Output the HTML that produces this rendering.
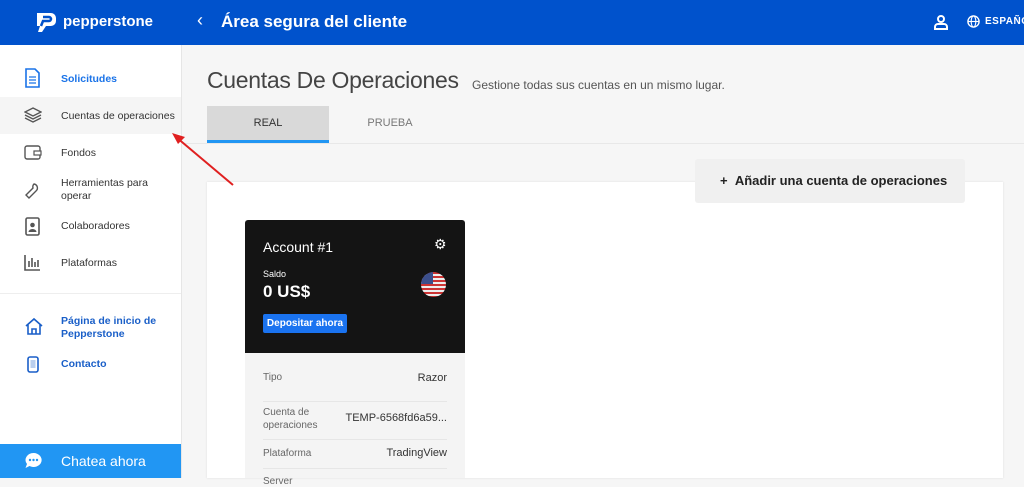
<!DOCTYPE html>
<html><head><meta charset="utf-8"><style>
*{margin:0;padding:0;box-sizing:border-box}
body{width:1024px;height:478px;overflow:hidden;background:#f6f6f6;font-family:"Liberation Sans",sans-serif;position:relative}
.hdr{position:absolute;left:0;top:0;width:1024px;height:45px;background:#0052cc;color:#fff}
.side{position:absolute;left:0;top:45px;width:182px;height:433px;background:#fff;border-right:1px solid #e6e6e6}
.it{position:absolute;left:0;width:181px;font-size:10.5px;color:#333}
.it span{position:absolute;left:61px}
.ic{position:absolute;left:24px}
.abs{position:absolute}
</style></head><body>
<div class="hdr">
 <svg class="abs" style="left:34px;top:10px" width="24" height="24" viewBox="0 0 24 24"><path d="M3 3h14a5 5 0 0 1 5 5v3a5 5 0 0 1-5 5h-5l-4 6H4l2-6H3z" fill="#fff"/><path d="M9 7h6a2 2 0 0 1 0 4h-6l-2 5" stroke="#0052cc" stroke-width="2.5" fill="none"/></svg>
 <div class="abs" style="left:63px;top:13px;font-size:15px;font-weight:bold">pepperstone</div>
 <div class="abs" style="left:197px;top:10px;font-size:18px">‹</div>
 <div class="abs" style="left:221px;top:12px;font-size:17px;font-weight:bold">Área segura del cliente</div>
 <svg class="abs" style="left:934px;top:14px" width="14" height="16" viewBox="0 0 14 16"><circle cx="7" cy="5" r="3" fill="none" stroke="#fff" stroke-width="2"/><path d="M1 15v-2a3 3 0 0 1 3-3h6a3 3 0 0 1 3 3v2z" fill="none" stroke="#fff" stroke-width="2"/></svg>
 <svg class="abs" style="left:967px;top:15px" width="13" height="13" viewBox="0 0 14 14"><circle cx="7" cy="7" r="6" fill="none" stroke="#fff" stroke-width="1.5"/><ellipse cx="7" cy="7" rx="2.5" ry="6" fill="none" stroke="#fff" stroke-width="1.2"/><path d="M1 7h12" stroke="#fff" stroke-width="1.2"/></svg>
 <div class="abs" style="left:985px;top:16px;font-size:10px;font-weight:bold;letter-spacing:.5px">ESPAÑO</div>
</div>
<div class="side">
 <div class="it" style="top:21px;height:26px;color:#1a73e8;font-weight:bold"><svg class="ic" style="top:2px" width="17" height="20" viewBox="0 0 17 20"><path d="M2 1h9l4 4v14H2z" fill="none" stroke="#1a73e8" stroke-width="1.6"/><path d="M5 9h7M5 12h7M5 15h7" stroke="#1a73e8" stroke-width="1.2"/></svg><span style="top:7px">Solicitudes</span></div>
 <div class="it" style="top:52px;height:37px;background:#f5f5f5"><svg class="ic" style="top:10px" width="18" height="16" viewBox="0 0 18 16"><path d="M9 1l8 4-8 4-8-4z M1 8l8 4 8-4 M1 11l8 4 8-4" fill="none" stroke="#555" stroke-width="1.4"/></svg><span style="top:13px">Cuentas de operaciones</span></div>
 <div class="it" style="top:97px;height:20px"><svg class="ic" style="top:2px" width="18" height="16" viewBox="0 0 18 16"><rect x="1" y="2" width="15" height="13" rx="2" fill="none" stroke="#555" stroke-width="1.4"/><rect x="10" y="7" width="7" height="4" fill="#fff" stroke="#555" stroke-width="1.2"/></svg><span style="top:5px">Fondos</span></div>
 <div class="it" style="top:132px;height:30px"><svg class="ic" style="top:5px" width="16" height="18" viewBox="0 0 16 18"><path d="M10 2a4 4 0 0 1 2 7l-7 7-3-3 7-7a4 4 0 0 1 1-4z" fill="none" stroke="#555" stroke-width="1.4"/></svg><span style="top:0;line-height:13px">Herramientas para<br>operar</span></div>
 <div class="it" style="top:171px;height:20px"><svg class="ic" style="top:1px" width="17" height="19" viewBox="0 0 17 19"><rect x="2" y="1" width="13" height="17" rx="1.5" fill="none" stroke="#555" stroke-width="1.6"/><circle cx="8.5" cy="8" r="2.3" fill="#555"/><path d="M4.5 15a4 3 0 0 1 8 0z" fill="#555"/></svg><span style="top:4px">Colaboradores</span></div>
 <div class="it" style="top:208px;height:20px"><svg class="ic" style="top:1px" width="17" height="17" viewBox="0 0 17 17"><path d="M1 1v15h15M5 13V7M8 13V4M11 13V8M14 13V6" stroke="#555" stroke-width="1.6" fill="none"/></svg><span style="top:4px">Plataformas</span></div>
 <div class="abs" style="left:0;top:248px;width:181px;border-top:1px solid #eee"></div>
 <div class="it" style="top:270px;height:26px;color:#1a5fc8;font-weight:bold"><svg class="ic" style="top:2px" width="20" height="19" viewBox="0 0 20 19"><path d="M2 9L10 2l8 7M4 7v10h12V7M8 17v-5h4v5" fill="none" stroke="#1a5fc8" stroke-width="1.6"/></svg><span style="top:0;line-height:13px">Página de inicio de<br>Pepperstone</span></div>
 <div class="it" style="top:310px;height:20px;color:#1a5fc8;font-weight:bold"><svg class="ic" style="top:1px;left:27px" width="12" height="17" viewBox="0 0 12 17"><rect x="1" y="1" width="10" height="15" rx="2" fill="none" stroke="#1a5fc8" stroke-width="1.6"/><rect x="3.5" y="4" width="5" height="8" fill="#1a5fc8" opacity=".3"/></svg><span style="top:3px">Contacto</span></div>
 <div class="abs" style="left:0;top:399px;width:181px;height:34px;background:#2196f3;color:#fff;font-size:14px"><svg class="abs" style="left:24px;top:8px" width="19" height="18" viewBox="0 0 19 18"><path d="M9.5 1a8 7 0 1 1-4 13l-4 2 1.5-4a8 7 0 0 1 6.5-11z" fill="#fff"/><circle cx="6" cy="8" r="1.2" fill="#2196f3"/><circle cx="9.5" cy="8" r="1.2" fill="#2196f3"/><circle cx="13" cy="8" r="1.2" fill="#2196f3"/></svg><span class="abs" style="left:61px;top:9px">Chatea ahora</span></div>
</div>
<div class="abs" style="left:207px;top:67px;font-size:23px;color:#444;letter-spacing:-0.3px">Cuentas De Operaciones</div>
<div class="abs" style="left:472px;top:78px;font-size:12px;color:#555">Gestione todas sus cuentas en un mismo lugar.</div>
<div class="abs" style="left:207px;top:106px;width:122px;height:35px;background:#d9d9d9;font-size:11px;color:#333;text-align:center;line-height:35px">REAL</div>
<div class="abs" style="left:207px;top:140px;width:122px;height:3px;background:#2196f3"></div>
<div class="abs" style="left:329px;top:106px;width:122px;height:35px;font-size:11px;color:#777;text-align:center;line-height:35px">PRUEBA</div>
<div class="abs" style="left:182px;top:143px;width:842px;border-top:1px solid #e8e8e8"></div>
<div class="abs" style="left:207px;top:182px;width:796px;height:296px;background:#fff;box-shadow:0 0 2px #ddd"></div>
<div class="abs" style="left:695px;top:159px;width:270px;height:44px;background:#f0f0f0;border-radius:3px;font-size:13px;font-weight:bold;color:#222;line-height:44px;padding-left:25px">+&nbsp;&nbsp;Añadir una cuenta de operaciones</div>
<div class="abs" style="left:245px;top:220px;width:220px;height:258px;background:#f4f4f4"></div>
<div class="abs" style="left:245px;top:220px;width:220px;height:133px;background:#141414;border-radius:3px 3px 0 0;color:#fff">
 <div class="abs" style="left:18px;top:19px;font-size:14px">Account #1</div>
 <div class="abs" style="left:189px;top:16px;font-size:14px">⚙</div>
 <div class="abs" style="left:18px;top:49px;font-size:9px">Saldo</div>
 <div class="abs" style="left:18px;top:62px;font-size:17px;font-weight:bold">0 US$</div>
 <div class="abs" style="left:176px;top:52px;width:25px;height:25px;border-radius:50%;background:repeating-linear-gradient(#c33 0 2px,#eee 2px 4px);overflow:hidden"><div style="width:12px;height:12px;background:#3b4f8c"></div></div>
 <div class="abs" style="left:18px;top:94px;width:84px;height:19px;background:#1a73f0;border-radius:2px;font-size:10px;font-weight:bold;text-align:center;line-height:19px">Depositar ahora</div>
</div>
<div class="abs" style="left:263px;top:372px;width:184px;font-size:10px;color:#666">
 <div style="height:30px;border-bottom:1px solid #e6e6e6;position:relative">Tipo<span class="abs" style="right:0;top:0;font-size:11px;color:#333">Razor</span></div>
 <div style="height:38px;border-bottom:1px solid #e6e6e6;position:relative;padding-top:4px;line-height:13px">Cuenta de<br>operaciones<span class="abs" style="right:0;top:10px;font-size:11px;color:#333">TEMP-6568fd6a59...</span></div>
 <div style="height:29px;border-bottom:1px solid #e6e6e6;position:relative;padding-top:8px">Plataforma<span class="abs" style="right:0;top:7px;font-size:11px;color:#333">TradingView</span></div>
 <div style="padding-top:7px">Server</div>
</div>
<svg class="abs" style="left:160px;top:125px" width="80" height="65"><path d="M73 60L16 12" stroke="#e02020" stroke-width="2"/><path d="M12 8l13 4-7 7z" fill="#e02020"/></svg>
</body></html>
